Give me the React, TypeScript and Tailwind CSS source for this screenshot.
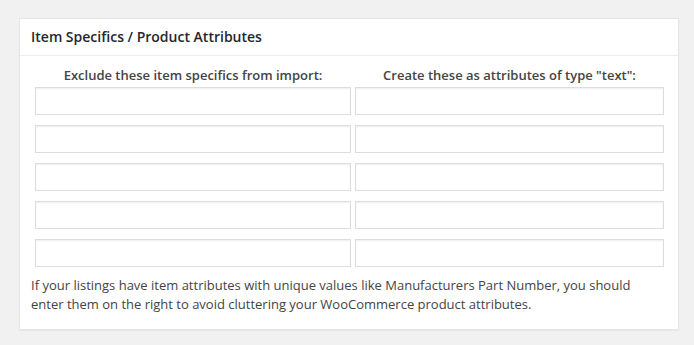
const rows = [0, 1, 2, 3, 4];

export default function App() {
  return (
    <div className="min-h-[345px] w-[694px] bg-[#f1f1f1] pt-[18px] pl-[19px] font-['Open_Sans',sans-serif] text-[#444]">
      <div className="w-[660px] border border-[#e5e5e5] bg-white shadow-[0_1px_1px_rgba(0,0,0,0.04)]">
        <div className="h-[37px] border-b border-[#eee] px-[11px] pt-[8px] text-[14px] leading-[20px] font-semibold text-[#23282d]">
          Item Specifics / Product Attributes
        </div>
        <div className="px-[15px] pt-[9px]">
          <div className="grid grid-cols-[316px_309px] gap-x-[4px]">
            <div className="h-[22px] text-center text-[13px] leading-[20px] font-semibold text-[#444]">
              Exclude these item specifics from import:
            </div>
            <div className="h-[22px] text-center text-[13px] leading-[20px] font-semibold text-[#444]">
              Create these as attributes of type "text":
            </div>
          </div>
          <div className="grid grid-cols-[316px_309px] gap-x-[4px] gap-y-[10px]">
            {rows.map((r) => (
              <>
                <input
                  key={"l" + r}
                  className="h-[28px] border border-[#ddd] bg-white shadow-[inset_0_1px_2px_rgba(0,0,0,0.07)] outline-none"
                />
                <input
                  key={"r" + r}
                  className="h-[28px] border border-[#ddd] bg-white shadow-[inset_0_1px_2px_rgba(0,0,0,0.07)] outline-none"
                />
              </>
            ))}
          </div>
        </div>
        <p className="px-[11px] pt-[9px] pb-[15px] text-[13px] leading-[19px] whitespace-nowrap text-[#444]">
          If your listings have item attributes with unique values like Manufacturers Part Number, you should
          <br />
          enter them on the right to avoid cluttering your WooCommerce product attributes.
        </p>
      </div>
    </div>
  );
}
